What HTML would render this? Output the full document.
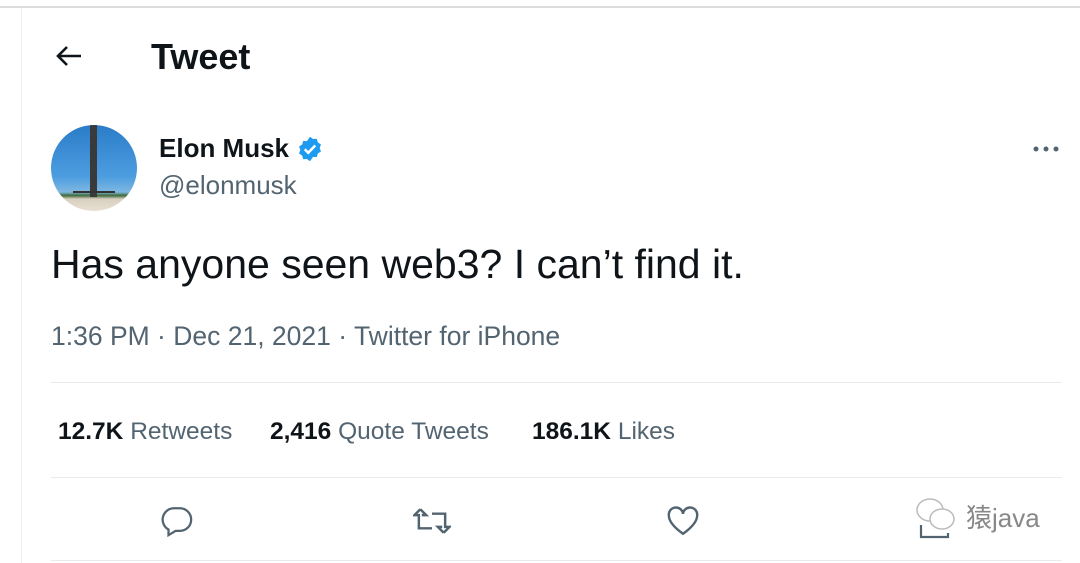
<!DOCTYPE html>
<html><head><meta charset="utf-8"><style>
body{margin:0;width:1080px;height:563px;background:#fff;font-family:"Liberation Sans",sans-serif;position:relative;overflow:hidden;color:#0f1419}
.a{position:absolute;white-space:nowrap}
.g{color:#536471}
</style></head><body>
<div class="a" style="left:0;top:6px;width:1080px;height:2px;background:#dcdcdc"></div>
<div class="a" style="left:21px;top:8px;width:1px;height:555px;background:#eef0f2"></div>
<svg class="a" style="left:55px;top:44px" width="28" height="24" viewBox="0 0 28 24"><path d="M26 12H3M12 3L3 12l9 9" fill="none" stroke="#0f1419" stroke-width="2.6"/></svg>
<div class="a" style="left:151px;top:36px;font-size:36px;font-weight:bold">Tweet</div>
<div class="a" style="left:51px;top:125px;width:86px;height:86px;border-radius:50%;overflow:hidden;background:linear-gradient(#2a7cc8,#4c9de0 60%,#7fb7e0 78%,#3f6a3a 82%,#d8cfc0 86%,#e8e0d4)">
<div style="position:absolute;left:39px;top:0;width:7px;height:72px;background:#3a3a3a"></div>
<div style="position:absolute;left:22px;top:66px;width:42px;height:8px;border-top:2px solid #333"></div></div>
<div class="a" style="left:159px;top:133px;font-size:26px;font-weight:bold">Elon Musk</div>
<svg class="a" style="left:296px;top:135px" width="28" height="28" viewBox="0 0 24 24"><path d="M12 1.5l2.6 1.9 3.2-.2.9 3.1 2.7 1.8-1.1 3 1.1 3-2.7 1.8-.9 3.1-3.2-.2L12 22.5l-2.6-1.9-3.2.2-.9-3.1-2.7-1.8 1.1-3-1.1-3 2.7-1.8.9-3.1 3.2.2z" fill="#1d9bf0"/><path d="M7.5 12.2l3 3 6-6.2" fill="none" stroke="#fff" stroke-width="2.2"/></svg>
<div class="a g" style="left:159px;top:170px;font-size:26px">@elonmusk</div>
<svg class="a" style="left:1032px;top:140px" width="28" height="18"><circle cx="4" cy="9" r="2.5" fill="#536471"/><circle cx="14" cy="9" r="2.5" fill="#536471"/><circle cx="24" cy="9" r="2.5" fill="#536471"/></svg>
<div class="a" style="left:51px;top:241px;font-size:41px">Has anyone seen web3? I can’t find it.</div>
<div class="a g" style="left:51px;top:321px;font-size:26.5px">1:36 PM · Dec 21, 2021 · Twitter for iPhone</div>
<div class="a" style="left:51px;top:382px;width:1011px;height:1px;background:#e6ecf0"></div>
<div class="a" style="left:58px;top:418px;font-size:24.5px"><b>12.7K</b> <span class="g">Retweets</span></div>
<div class="a" style="left:270px;top:418px;font-size:24.5px"><b>2,416</b> <span class="g">Quote Tweets</span></div>
<div class="a" style="left:532px;top:418px;font-size:24.5px"><b>186.1K</b> <span class="g">Likes</span></div>
<div class="a" style="left:51px;top:477px;width:1011px;height:1px;background:#e6ecf0"></div>
<div class="a" style="left:51px;top:560px;width:1011px;height:1px;background:#e6ecf0"></div>
<svg class="a" style="left:160px;top:504px" width="34" height="34" viewBox="0 0 24 24"><path d="M10 3h4a8 8 0 010 16h-3l-5 3v-4a8 8 0 014-15z" fill="none" stroke="#536471" stroke-width="1.6"/></svg>
<svg class="a" style="left:413px;top:506px" width="38" height="30" viewBox="0 0 26 20"><path d="M5 2L1 6h3v9h9M5 2l4 4H6M21 18l4-4h-3V5h-9M21 18l-4-4h3" fill="none" stroke="#536471" stroke-width="1.7"/></svg>
<svg class="a" style="left:666px;top:505px" width="34" height="32" viewBox="0 0 24 22"><path d="M12 20C5 15 2 11 2 7a5 5 0 0110-1 5 5 0 0110 1c0 4-3 8-10 13z" fill="none" stroke="#536471" stroke-width="1.7"/></svg>
<svg class="a" style="left:912px;top:492px" width="54" height="48" viewBox="0 0 54 48"><ellipse cx="18" cy="18" rx="13" ry="11" fill="#fff" stroke="#bbb" stroke-width="1.5"/><ellipse cx="30" cy="27" rx="12" ry="10" fill="#fff" stroke="#bbb" stroke-width="1.5"/><path d="M9 33v12h27v-4" fill="none" stroke="#536471" stroke-width="2.2"/></svg>
<div class="a" style="left:966px;top:498px;font-size:26px;color:#888;font-family:'Liberation Sans','Noto Sans CJK SC',sans-serif">猿java</div>
</body></html>
